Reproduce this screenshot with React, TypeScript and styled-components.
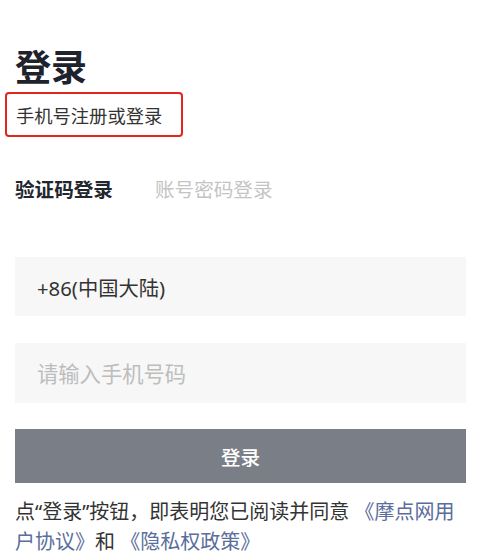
import styled, { createGlobalStyle } from "styled-components";

const GlobalStyle = createGlobalStyle`
  body {
    margin: 0;
    background: #fff;
    font-family: "Noto Sans", "Noto Sans CJK SC", sans-serif;
  }
  * {
    box-sizing: border-box;
  }
`;

export default function App() {
  return (
    <>
      <GlobalStyle />
      <Page>
        <Title>登录</Title>
        <SubTitle>手机号注册或登录</SubTitle>
        <Tabs>
          <Tab $active>验证码登录</Tab>
          <Tab>账号密码登录</Tab>
        </Tabs>
        <Field>+86(中国大陆)</Field>
        <PhoneInput placeholder="请输入手机号码" />
        <LoginButton>登录</LoginButton>
        <Agreement>
          点“登录”按钮，即表明您已阅读并同意 <Link>《摩点网用户协议》</Link>和 <Link>《隐私权政策》</Link>
        </Agreement>
      </Page>
    </>
  );
}

const Page = styled.div`
  display: flex;
  flex-direction: column;
  padding: 46px 25px 0 15px;
`;

const Title = styled.h1`
  margin: 0;
  font-size: 36px;
  line-height: 44px;
  font-weight: 700;
  color: #1e222d;
`;

const SubTitle = styled.div`
  align-self: flex-start;
  margin: 2px 0 0 -10px;
  width: 178px;
  height: 45px;
  padding-left: 9px;
  display: flex;
  align-items: center;
  border: 2px solid #e2261c;
  border-radius: 4px;
  font-size: 18.3px;
  color: #333;
`;

const Tabs = styled.div`
  display: flex;
  gap: 42px;
  margin-top: 40px;
`;

const Tab = styled.span<{ $active?: boolean }>`
  font-size: 19.6px;
  line-height: 26px;
  font-weight: ${(p) => (p.$active ? 700 : 400)};
  color: ${(p) => (p.$active ? "#22262e" : "#c4c4c4")};
`;

const Field = styled.div`
  margin-top: 54px;
  height: 59px;
  padding-left: 22px;
  display: flex;
  align-items: center;
  background: #f7f7f7;
  font-size: 20.3px;
  color: #333;
`;

const PhoneInput = styled.input`
  margin-top: 27px;
  height: 60px;
  padding: 0 0 0 22px;
  border: none;
  outline: none;
  background: #f7f7f7;
  font-family: inherit;
  font-size: 21.3px;
  color: #333;

  &::placeholder {
    color: #bdbdbd;
  }
`;

const LoginButton = styled.button`
  margin-top: 26px;
  height: 54px;
  border: none;
  background: #7a7f87;
  color: #fff;
  font-family: inherit;
  font-size: 19.6px;
  font-weight: 500;
`;

const Agreement = styled.p`
  margin: 14px 0 0;
  font-size: 20px;
  line-height: 30px;
  color: #333;
`;

const Link = styled.span`
  color: #5a6d9b;
`;
